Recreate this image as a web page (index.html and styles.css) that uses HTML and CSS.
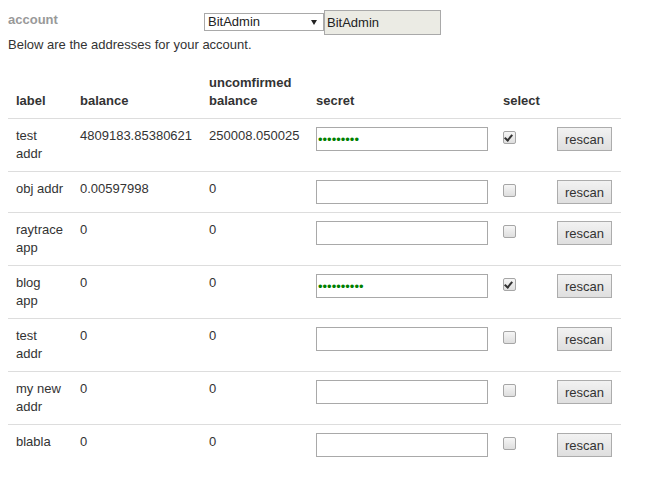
FILE: index.html
```html
<!DOCTYPE html>
<html>
<head>
<meta charset="utf-8">
<link rel="stylesheet" href="styles.css">
</head>
<body>
<div class="account-row">
  <label class="account-label">account</label>
  <span class="select-wrap">
    <select class="account-select"><option>BitAdmin</option></select>
  </span>
  <input class="account-name" type="text" value="BitAdmin" readonly>
</div>
<p class="intro">Below are the addresses for your account.</p>
<table class="addr-table">
  <colgroup>
    <col class="c-label"><col class="c-bal"><col class="c-unc"><col class="c-secret"><col class="c-select"><col class="c-btn">
  </colgroup>
  <thead>
    <tr><th>label</th><th>balance</th><th>uncomfirmed balance</th><th>secret</th><th>select</th><th></th></tr>
  </thead>
  <tbody>
    <tr><td>test addr</td><td>4809183.85380621</td><td>250008.050025</td><td><input class="secret" type="password" value="123456789"></td><td><input class="chk" type="checkbox" checked></td><td><button class="rescan">rescan</button></td></tr>
    <tr><td>obj addr</td><td>0.00597998</td><td>0</td><td><input class="secret" type="password" value=""></td><td><input class="chk" type="checkbox"></td><td><button class="rescan">rescan</button></td></tr>
    <tr><td>raytrace app</td><td>0</td><td>0</td><td><input class="secret" type="password" value=""></td><td><input class="chk" type="checkbox"></td><td><button class="rescan">rescan</button></td></tr>
    <tr><td>blog app</td><td>0</td><td>0</td><td><input class="secret" type="password" value="1234567890"></td><td><input class="chk" type="checkbox" checked></td><td><button class="rescan">rescan</button></td></tr>
    <tr><td>test addr</td><td>0</td><td>0</td><td><input class="secret" type="password" value=""></td><td><input class="chk" type="checkbox"></td><td><button class="rescan">rescan</button></td></tr>
    <tr><td>my new addr</td><td>0</td><td>0</td><td><input class="secret" type="password" value=""></td><td><input class="chk" type="checkbox"></td><td><button class="rescan">rescan</button></td></tr>
    <tr><td>blabla</td><td>0</td><td>0</td><td><input class="secret" type="password" value=""></td><td><input class="chk" type="checkbox"></td><td><button class="rescan">rescan</button></td></tr>
  </tbody>
</table>
</body>
</html>
```

FILE: styles.css
```css
html, body {
  background: #fff;
}
body {
  margin: 8px;
  font-family: "Liberation Sans", Arial, sans-serif;
  font-size: 13px;
  line-height: 18px;
  color: #333;
}
.account-row {
  display: flex;
  align-items: flex-start;
  height: 27px;
}
.account-label {
  width: 196px;
  margin-top: 3px;
  font-weight: bold;
  color: #999;
}
.select-wrap {
  position: relative;
  margin-top: 5px;
  display: block;
}
.select-wrap::after {
  content: "";
  position: absolute;
  right: 7px;
  top: 7px;
  border-left: 3px solid transparent;
  border-right: 3px solid transparent;
  border-top: 5px solid #222;
  pointer-events: none;
}
.account-select {
  -webkit-appearance: none;
  appearance: none;
  display: block;
  width: 120px;
  height: 18px;
  margin: 0;
  padding: 0 0 0 3px;
  border: 1px solid #a9a9a9;
  border-radius: 0;
  background: #fff;
  font-family: inherit;
  font-size: 13px;
  line-height: 16px;
  color: #222;
}
.account-name {
  display: block;
  box-sizing: border-box;
  width: 117px;
  height: 25px;
  margin: 2px 0 0 0;
  padding: 0 2px;
  border: 1px solid #a9a9a9;
  border-radius: 0;
  background: #ebebe4;
  font-family: inherit;
  font-size: 13px;
  color: #222;
  outline: none;
}
.intro {
  margin: 1px 0 12px 0;
}
.addr-table {
  border-collapse: collapse;
  table-layout: fixed;
  width: 613px;
}
.c-label { width: 64px; }
.c-bal { width: 129px; }
.c-unc { width: 107px; }
.c-secret { width: 187px; }
.c-select { width: 54px; }
.c-btn { width: 72px; }
.addr-table th {
  text-align: left;
  vertical-align: bottom;
  padding: 8px;
  font-weight: bold;
  border-bottom: 1px solid #ddd;
}
.addr-table td {
  vertical-align: top;
  padding: 8px;
  border-top: 1px solid #ddd;
}
.secret {
  display: block;
  box-sizing: border-box;
  width: 172px;
  height: 24px;
  margin: 0;
  padding: 0 1px;
  border: 1px solid #a9a9a9;
  border-radius: 0;
  background: #fff;
  font-family: "Liberation Sans", Arial, sans-serif;
  font-size: 13px;
  color: #008000;
  outline: none;
}
.chk {
  -webkit-appearance: none;
  appearance: none;
  position: relative;
  display: block;
  width: 13px;
  height: 13px;
  margin: 4px 0 0 0;
  border: 1px solid #a6a6a6;
  border-radius: 2px;
  background: linear-gradient(#f6f6f6, #dedede);
  box-sizing: border-box;
}
.chk:checked::after {
  content: "";
  position: absolute;
  left: 2px;
  top: 1px;
  width: 3px;
  height: 6px;
  border-right: 2px solid #333;
  border-bottom: 2px solid #333;
  transform: rotate(40deg);
}
.rescan {
  -webkit-appearance: none;
  appearance: none;
  display: block;
  box-sizing: border-box;
  width: 55px;
  height: 24px;
  margin: 0;
  padding: 0;
  border: 1px solid #acacac;
  border-radius: 0;
  background: linear-gradient(#f2f2f2, #dfdfdf);
  font-family: "Liberation Sans", Arial, sans-serif;
  font-size: 13px;
  color: #333;
}
```
